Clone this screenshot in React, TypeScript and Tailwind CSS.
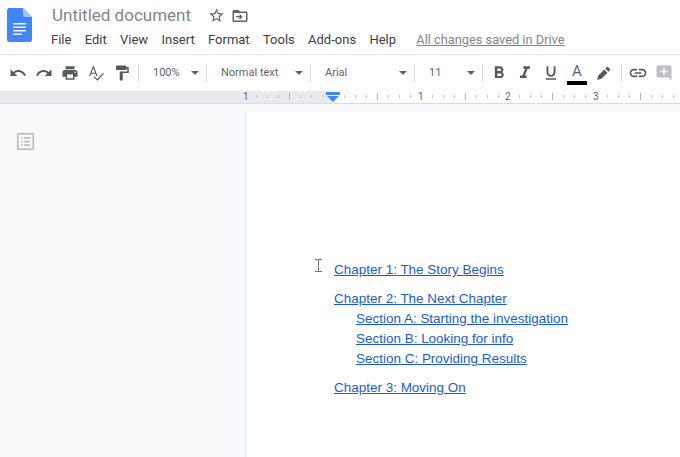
const GRAY = "#555a5e";

const icons: Record<string, string> = {
  undo: "M12.5 8c-2.65 0-5.05.99-6.9 2.6L2 7v9h9l-3.62-3.62c1.39-1.16 3.16-1.88 5.12-1.88 3.54 0 6.55 2.31 7.6 5.5l2.37-.78C21.08 11.03 17.15 8 12.5 8z",
  redo: "M18.4 10.6C16.55 8.99 14.15 8 11.5 8c-4.65 0-8.58 3.03-9.96 7.22L3.9 16c1.05-3.19 4.05-5.5 7.6-5.5 1.95 0 3.73.72 5.12 1.88L13 16h9V7l-3.6 3.6z",
  print: "M19 8H5c-1.66 0-3 1.34-3 3v6h4v4h12v-4h4v-6c0-1.66-1.34-3-3-3zm-3 11H8v-5h8v5zm3-7c-.55 0-1-.45-1-1s.45-1 1-1 1 .45 1 1-.45 1-1 1zm-1-9H6v4h12V3z",
  spell: "M12.45 16h1.6L9.2 3H7.8L2.95 16h1.6l1.12-3h5.64l1.14 3zm-6.3-4.4L8.5 5.2l2.35 6.4h-4.7zm15.44.4l-8.09 8.09L9.83 16.4l-1 1 5.09 5.09L22.6 13l-1.01-1z",
  paint: "M18 4V3c0-.55-.45-1-1-1H5c-.55 0-1 .45-1 1v4c0 .55.45 1 1 1h12c.55 0 1-.45 1-1V6h1v4H9v11c0 .55.45 1 1 1h2c.55 0 1-.45 1-1v-9h8V4h-3z",
  bold: "M15.6 10.79c.97-.67 1.65-1.77 1.65-2.79 0-2.26-1.75-4-4-4H7v14h7.04c2.09 0 3.71-1.7 3.71-3.79 0-1.52-.86-2.82-2.15-3.42zM10 6.5h3c.83 0 1.5.67 1.5 1.5s-.67 1.5-1.5 1.5h-3v-3zm3.5 9H10v-3h3.5c.83 0 1.5.67 1.5 1.5s-.67 1.5-1.5 1.5z",
  italic: "M10 4v3h2.21l-3.42 8H6v3h8v-3h-2.21l3.42-8H18V4z",
  underline: "M12 17c3.31 0 6-2.69 6-6V3h-2.5v8c0 1.93-1.57 3.5-3.5 3.5S8.5 12.93 8.5 11V3H6v8c0 3.31 2.69 6 6 6zm-7 2v2h14v-2H5z",
  pen: "M3 21l1.5-6L13 6.5l4.5 4.5L9 19.5zM14.5 5l2.3-2.3a1 1 0 0 1 1.4 0l3.1 3.1a1 1 0 0 1 0 1.4L19 9.5z",
  link: "M3.9 12c0-1.71 1.39-3.1 3.1-3.1h4V7H7c-2.76 0-5 2.24-5 5s2.24 5 5 5h4v-1.9H7c-1.71 0-3.1-1.39-3.1-3.1zM8 13h8v-2H8v2zm9-6h-4v1.9h4c1.71 0 3.1 1.39 3.1 3.1s-1.39 3.1-3.1 3.1h-4V17h4c2.76 0 5-2.24 5-5s-2.24-5-5-5z",
  comment: "M20 2H4c-1.1 0-2 .9-2 2v12c0 1.1.9 2 2 2h14l4 4V4c0-1.1-.9-2-2-2zm-3 9h-4v4h-2v-4H7V9h4V5h2v4h4v2z",
  star: "M22 9.24l-7.19-.62L12 2 9.19 8.63 2 9.24l5.46 4.73L5.82 21 12 17.27 18.18 21l-1.63-7.03L22 9.24zM12 15.4l-3.76 2.27 1-4.28-3.32-2.88 4.38-.38L12 6.1l1.71 4.04 4.38.38-3.32 2.88 1 4.28L12 15.4z",
  folder: "M20 6h-8l-2-2H4c-1.1 0-2 .9-2 2v12c0 1.1.9 2 2 2h16c1.1 0 2-.9 2-2V8c0-1.1-.9-2-2-2zm0 12H4V8h16v10zM12 9.5l-1.2 1.2 1.4 1.4H7v1.8h5.2l-1.4 1.4 1.2 1.2 3.5-3.5z",
};

function Icon({ name, size = 18, color = GRAY }: { name: string; size?: number; color?: string }) {
  return (
    <svg width={size} height={size} viewBox="0 0 24 24" fill={color}>
      <path d={icons[name]} fillRule="evenodd" />
    </svg>
  );
}

function Btn({ name, size, className = "" }: { name: string; size?: number; className?: string }) {
  return (
    <div className={`flex h-6 w-[26px] items-center justify-center ${className}`}>
      <Icon name={name} size={size} />
    </div>
  );
}

function Sep({ className = "" }: { className?: string }) {
  return <div className={`h-[18px] w-px bg-[#dadce0] ${className}`} />;
}

function Dropdown({ label, width }: { label: string; width: string }) {
  return (
    <div className={`flex items-center justify-between pl-[14px] pr-[7px] text-[11px] text-[#5f6368] ${width}`}>
      <span>{label}</span>
      <div className="h-0 w-0 border-x-4 border-t-4 border-x-transparent border-t-[#5f6368]" />
    </div>
  );
}

function DocsLogo() {
  return (
    <svg width="25" height="34" viewBox="0 0 25 34">
      <path d="M2.5 0H16l9 9v22.5a2.5 2.5 0 0 1-2.5 2.5h-20A2.5 2.5 0 0 1 0 31.5v-29A2.5 2.5 0 0 1 2.5 0z" fill="#4285f4" />
      <path d="M16 0l9 9h-6.5A2.5 2.5 0 0 1 16 6.5z" fill="#a1c2fa" />
      <path d="M6 15h13v1.6H6zM6 18.5h13v1.6H6zM6 22h13v1.6H6zM6 25.5h9v1.6H6z" fill="#f1f1f1" />
    </svg>
  );
}

function RulerTicks() {
  // 1/8 inch ticks around the zero point at x=333
  const ticks = [];
  for (let i = -7; i < 32; i++) {
    if (i % 8 === 0) continue;
    const x = 333 + i * 10.97;
    const long = i % 4 === 0;
    ticks.push(
      <rect key={i} x={Math.round(x)} y={long ? 2 : 4} width="1" height={long ? 7 : 3} fill={long ? "#b0b3b8" : "#c4c7c5"} />,
    );
  }
  return (
    <svg className="absolute left-0 top-0" width="680" height="12">
      {ticks}
    </svg>
  );
}

const rulerNumbers = [
  { n: 1, left: "left-[243px]" },
  { n: 1, left: "left-[418px]" },
  { n: 2, left: "left-[505px]" },
  { n: 3, left: "left-[593px]" },
];

function Ruler() {
  return (
    <div className="relative flex h-[13px] border-b border-[#dadce0]">
      <div className="w-[333px] bg-[#e8eaed]" />
      <div className="flex-1 bg-white" />
      <RulerTicks />
      {rulerNumbers.map(({ n, left }) => (
        <span key={left} className={`absolute top-0 bg-transparent text-[10px] leading-[12px] text-[#5f6368] ${left}`}>
          {n}
        </span>
      ))}
      <svg className="absolute left-[326px] top-[1px]" width="14" height="10" viewBox="0 0 14 10">
        <path d="M0 0h14v3H0z" fill="#4285f4" />
        <path d="M1 4h12L7 10z" fill="#4285f4" />
      </svg>
    </div>
  );
}

function DocLink({ children, className = "" }: { children: string; className?: string }) {
  return <a className={`block w-max text-[#1a5ccc] underline ${className}`}>{children}</a>;
}

const menu = ["File", "Edit", "View", "Insert", "Format", "Tools", "Add-ons", "Help"];

export default function App() {
  return (
    <div className="flex h-[457px] w-[680px] flex-col overflow-hidden bg-white font-['Roboto',sans-serif]">
      <header className="flex h-[55px] border-b border-[#e0e2e5] pl-[7px]">
        <div className="pt-2">
          <DocsLogo />
        </div>
        <div className="pl-[19px]">
          <div className="flex h-[31px] items-center">
            <h1 className="ml-px text-[17px] font-normal text-[#80868b]">Untitled document</h1>
            <div className="ml-[17px]">
              <Icon name="star" size={17} color="#5f6368" />
            </div>
            <div className="ml-[6px]">
              <Icon name="folder" size={18} color="#5f6368" />
            </div>
          </div>
          <nav className="mt-px flex items-center gap-[13.3px] text-[13px] leading-[16px] text-[#3c4043]">
            {menu.map((m) => (
              <span key={m}>{m}</span>
            ))}
            <span className="ml-[7px] text-[12.8px] text-[#80868b] underline">All changes saved in Drive</span>
          </nav>
        </div>
      </header>

      <div className="flex h-[36px] items-center pl-[5px]">
        <Btn name="undo" />
        <Btn name="redo" />
        <Btn name="print" />
        <Btn name="spell" />
        <Btn name="paint" />
        <Sep className="ml-[3px]" />
        <Dropdown label="100%" width="w-[67px]" />
        <Sep />
        <Dropdown label="Normal text" width="w-[103px]" />
        <Sep />
        <Dropdown label="Arial" width="w-[103px]" />
        <Sep />
        <Dropdown label="11" width="w-[67px]" />
        <Sep />
        <Btn name="bold" size={20} className="ml-[3px]" />
        <Btn name="italic" size={20} />
        <Btn name="underline" />
        <div className="relative flex h-6 w-[26px] justify-center">
          <span className="text-[15px] leading-[20px] text-[#5f6368]">A</span>
          <div className="absolute left-[3px] top-[20px] h-[4px] w-[20px] bg-black" />
        </div>
        <Btn name="pen" size={17} />
        <Sep className="ml-[5px]" />
        <Btn name="link" size={20} className="ml-[3px]" />
        <div className="flex h-6 w-[26px] items-center justify-center">
          <Icon name="comment" color="#bdc1c6" />
        </div>
      </div>

      <Ruler />

      <main className="flex flex-1 bg-[#f8f9fa]">
        <aside className="w-[245px] pl-[17px] pt-[29px]">
          <svg width="17" height="17" viewBox="0 0 17 17" fill="none">
            <rect x="0.75" y="0.75" width="15.5" height="15.5" rx="1" stroke="#b4b6b8" strokeWidth="1.5" />
            <path d="M4 5h1.5M7 5h6M4 8.5h1.5M7 8.5h6M4 12h1.5M7 12h6" stroke="#b4b6b8" strokeWidth="1.4" />
          </svg>
        </aside>
        <div className="relative mt-2 flex-1 border-l border-[#e8eaed] bg-white pl-[88px] pt-[148px] font-['Liberation_Sans',sans-serif] text-[13.47px] leading-[20px]">
          <svg className="absolute left-[69px] top-[147px]" width="7" height="13" viewBox="0 0 7 13">
            <path d="M0 .5h7M0 12.5h7M3.5 .5v12" stroke="#70757a" strokeWidth="1" />
          </svg>
          <DocLink>Chapter 1: The Story Begins</DocLink>
          <DocLink className="mt-[9px]">Chapter 2: The Next Chapter</DocLink>
          <DocLink className="ml-[22px]">Section A: Starting the investigation</DocLink>
          <DocLink className="ml-[22px]">Section B: Looking for info</DocLink>
          <DocLink className="ml-[22px]">Section C: Providing Results</DocLink>
          <DocLink className="mt-[9px]">Chapter 3: Moving On</DocLink>
        </div>
      </main>
    </div>
  );
}
